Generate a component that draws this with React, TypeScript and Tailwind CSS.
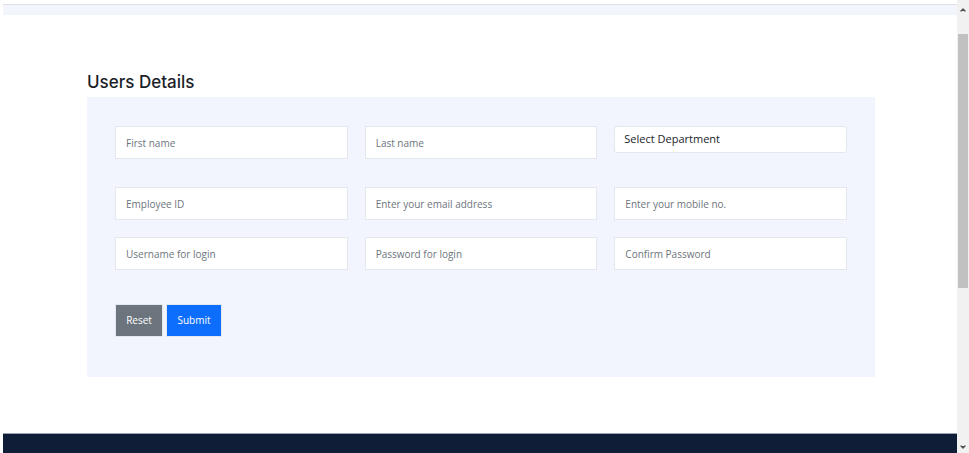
import { ChevronDown, ChevronUp } from 'lucide-react'

const rows = [
  ['Employee ID', 'Enter your email address', 'Enter your mobile no.'],
  ['Username for login', 'Password for login', 'Confirm Password'],
]

const inputCls =
  "h-[33px] w-full border border-[#e3e7ee] bg-white px-[10px] text-[10px] text-[#495057] placeholder:text-[#6c757d] outline-none font-['Open_Sans',sans-serif]"

export default function App() {
  return (
    <div className="flex h-[453px] w-[969px] overflow-hidden bg-white">
      <div className="flex min-w-0 flex-1 flex-col pl-[3px]">
        <div className="mt-[4px] h-[11px] border-t border-[#dfe1e5] bg-[#f2f5fc]" />

        <main className="flex-1 pl-[84px] pr-[82px] pt-[57px]">
          <h2 className="mb-[5px] text-[17px] font-medium leading-[20px] text-[#1c1f2a] font-['Inter',sans-serif]">Users Details</h2>
          <section className="bg-[#f2f5fd] px-[28px] pb-[40px] pt-[29px]">
            <div className="grid grid-cols-3 gap-x-[17px]">
              <input className={inputCls} placeholder="First name" />
              <input className={inputCls} placeholder="Last name" />
              <div className="flex h-[27px] items-center rounded-[3px] border border-[#e3e7ee] bg-white px-[9px] text-[11px] text-[#212529] font-['Open_Sans',sans-serif]">Select Department</div>
            </div>
            <div className="mt-[28px] grid grid-cols-3 gap-x-[17px] gap-y-[17px]">
              {rows.flat().map((p) => (
                <input key={p} className={inputCls} placeholder={p} />
              ))}
            </div>
            <div className="mt-[34px] flex gap-[3px] font-['Open_Sans',sans-serif] text-[10px] text-white">
              <button className="h-[33px] w-[48px] border border-[#e3e7ee] bg-[#6c757d]">Reset</button>
              <button className="h-[33px] w-[56px] border border-[#e3e7ee] bg-[#0d6efd]">Submit</button>
            </div>
          </section>
        </main>

        <footer className="h-[20px] border-t border-[#9aa3b5] bg-[#0f1d36]" />
      </div>

      <div className="flex w-[12px] flex-col items-center bg-[#f1f1f1]">
        <ChevronUp className="mt-[6px] h-[8px] w-[8px] fill-[#505050] text-[#505050]" strokeWidth={4} />
        <div className="mt-[20px] h-[254px] w-[10px] bg-[#c1c1c1]" />
        <div className="flex-1" />
        <ChevronDown className="mb-[2px] h-[8px] w-[8px] fill-[#505050] text-[#505050]" strokeWidth={4} />
      </div>
    </div>
  )
}
